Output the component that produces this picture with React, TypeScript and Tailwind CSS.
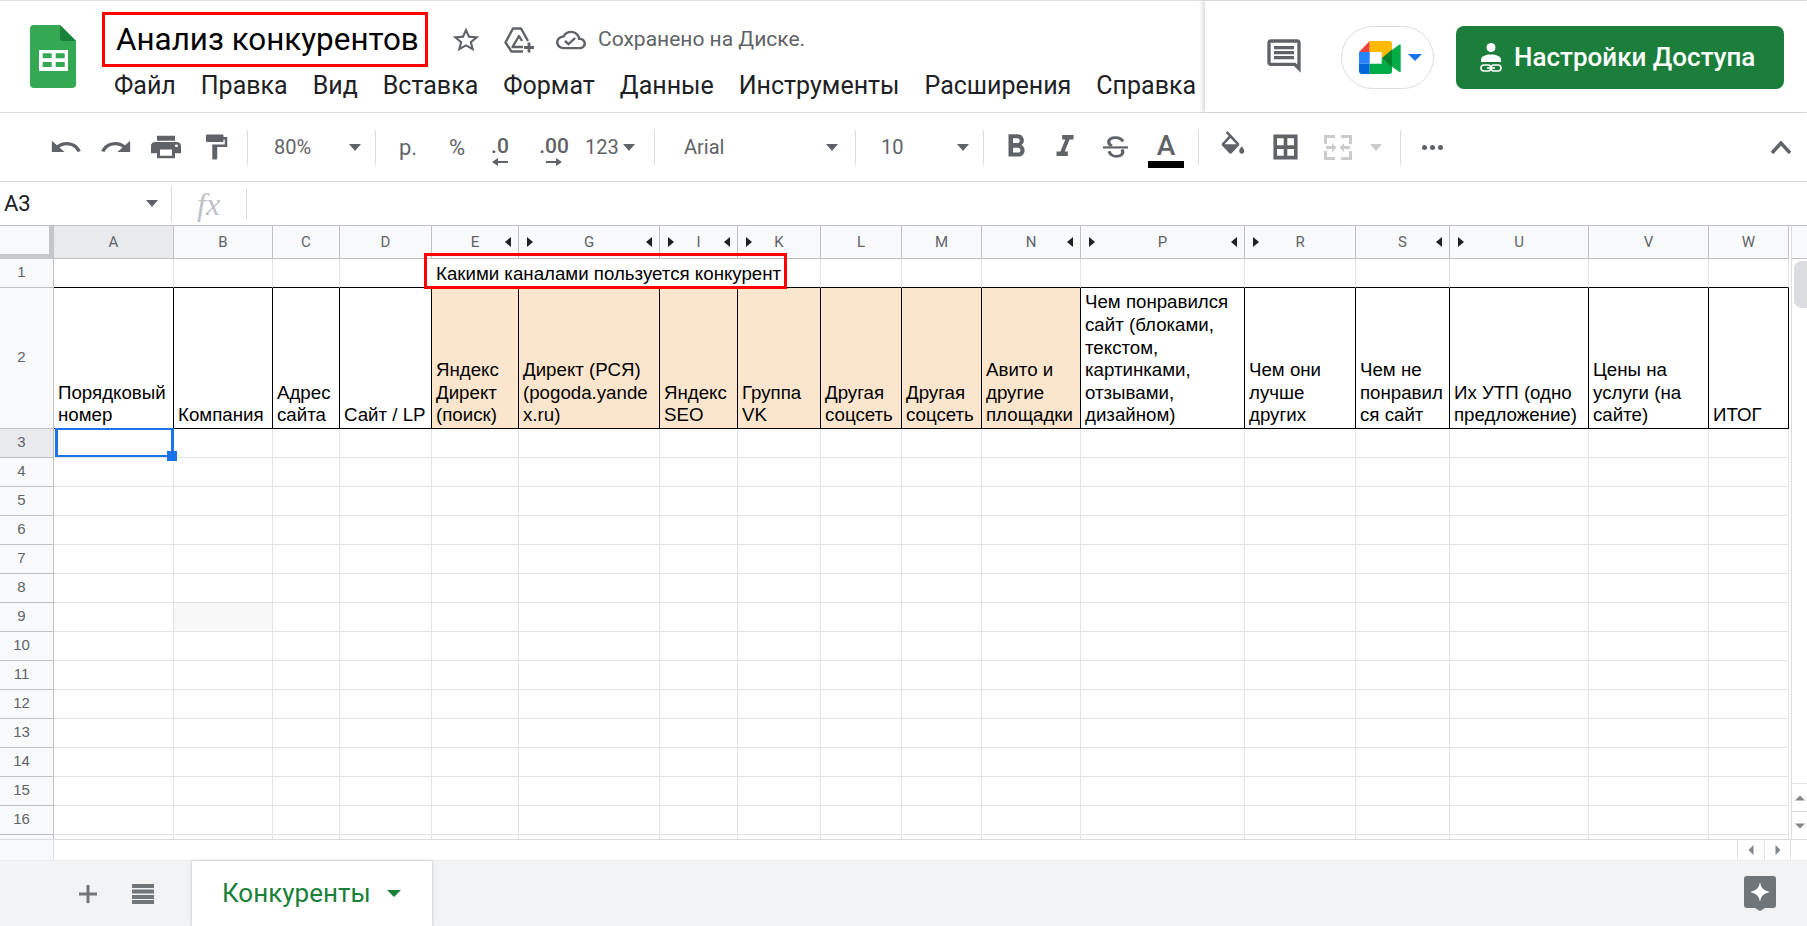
import type { ReactNode } from "react";

const icons = {
  undo: "M12.5 8c-2.65 0-5.05.99-6.9 2.6L2 7v9h9l-3.62-3.62c1.39-1.16 3.16-1.88 5.12-1.88 3.54 0 6.55 2.31 7.6 5.5l2.37-.78C21.08 11.03 17.15 8 12.5 8z",
  redo: "M18.4 10.6C16.55 8.99 14.15 8 11.5 8c-4.65 0-8.58 3.03-9.96 7.22L3.9 16c1.05-3.19 4.05-5.5 7.6-5.5 1.95 0 3.73.72 5.12 1.88L13 16h9V7l-3.6 3.6z",
  print: "M19 8H5c-1.66 0-3 1.34-3 3v6h4v4h12v-4h4v-6c0-1.66-1.34-3-3-3zm-3 11H8v-5h8v5zm3-7c-.55 0-1-.45-1-1s.45-1 1-1 1 .45 1 1-.45 1-1 1zm-1-9H6v4h12V3z",
  paint: "M18 4V3c0-.55-.45-1-1-1H5c-.55 0-1 .45-1 1v4c0 .55.45 1 1 1h12c.55 0 1-.45 1-1V6h1v4H9v11c0 .55.45 1 1 1h2c.55 0 1-.45 1-1v-9h8V4h-3z",
  bold: "M15.6 10.79c.97-.67 1.65-1.77 1.65-2.79 0-2.26-1.75-4-4-4H7v14h7.04c2.09 0 3.71-1.7 3.71-3.79 0-1.52-.86-2.82-2.15-3.42zM10 6.5h3c.83 0 1.5.67 1.5 1.5s-.67 1.5-1.5 1.5h-3v-3zm3.5 9H10v-3h3.5c.83 0 1.5.67 1.5 1.5s-.67 1.5-1.5 1.5z",
  italic: "M10 4v3h2.21l-3.42 8H6v3h8v-3h-2.21l3.42-8H18V4z",
  star: "M22 9.24l-7.19-.62L12 2 9.19 8.63 2 9.24l5.46 4.73L5.82 21 12 17.27 18.18 21l-1.63-7.03L22 9.24zM12 15.4l-3.76 2.27 1-4.28-3.32-2.88 4.38-.38L12 6.1l1.71 4.04 4.38.38-3.32 2.88 1 4.28L12 15.4z",
  cloud: "M19.35 10.04C18.67 6.59 15.64 4 12 4 9.11 4 6.6 5.64 5.35 8.04 2.34 8.36 0 10.91 0 14c0 3.31 2.69 6 6 6h13c2.76 0 5-2.24 5-5 0-2.64-2.05-4.78-4.65-4.96zM19 18H6c-2.21 0-4-1.79-4-4 0-2.05 1.53-3.76 3.56-3.97l1.07-.11.5-.95C8.08 7.14 9.94 6 12 6c2.62 0 4.88 1.86 5.39 4.43l.3 1.5 1.53.11c1.56.1 2.78 1.41 2.78 2.96 0 1.65-1.35 3-3 3zm-9-3.82l-2.09-2.09L6.5 13.5 10 17l6.01-6.01-1.41-1.41z",
  fill: "M16.56 8.94L7.62 0 6.21 1.41l2.38 2.38-5.15 5.15c-.59.59-.59 1.54 0 2.12l5.5 5.5c.29.29.68.44 1.06.44s.77-.15 1.06-.44l5.5-5.5c.59-.58.59-1.53 0-2.12zM5.21 10L10 5.21 14.79 10H5.21zM19 11.5s-2 2.17-2 3.5c0 1.1.9 2 2 2s2-.9 2-2c0-1.33-2-3.5-2-3.5z",
  borders: "M2 2v20h20V2H2zm8.500 17H5v-5.500h5.500V19zm0-8.500H5V5h5.500v5.500zM19 19h-5.500v-5.500H19V19zm0-8.500h-5.500V5H19v5.500z",
  comment: "M21.99 4c0-1.1-.89-2-1.99-2H4c-1.1 0-2 .9-2 2v12c0 1.1.9 2 2 2h14l4 4-.01-18zM20 4v13.17L18.83 16H4V4h16zM6 12h12v2H6zm0-3h12v2H6zm0-3h12v2H6z",
};

function Icon({ d, className }: { d: string; className: string }) {
  return (
    <svg viewBox="0 0 24 24" preserveAspectRatio="none" fill="currentColor" className={className}>
      <path d={d} />
    </svg>
  );
}

function Caret({ className = "h-[7px] w-3 text-[#5f6368]" }: { className?: string }) {
  return (
    <svg viewBox="0 0 10 5" preserveAspectRatio="none" fill="currentColor" className={"shrink-0 " + className}>
      <path d="M0 0h10L5 5z" />
    </svg>
  );
}

function Sep() {
  return <div className="h-[35px] w-px shrink-0 bg-[#dadce0]" />;
}

function SheetsLogo() {
  return (
    <svg viewBox="0 0 46 63" className="h-[63px] w-[46px] shrink-0">
      <path d="M4 0h26l16 16v43a4 4 0 0 1-4 4H4a4 4 0 0 1-4-4V4a4 4 0 0 1 4-4z" fill="#34a853" />
      <path d="M30 0l16 16H33a3 3 0 0 1-3-3z" fill="#188038" />
      <path d="M9 25h29v21H9z" fill="#fff" />
      <path d="M12.700 28.300h9v5h-9zm13 0h9v5h-9zM12.700 37h9v5h-9zm13 0h9v5h-9z" fill="#34a853" />
    </svg>
  );
}

function MeetLogo() {
  return (
    <svg viewBox="0 0 42 33" className="h-[33px] w-[42px] shrink-0">
      <path d="M10.700 0L0 11h10.700z" fill="#ea4335" />
      <path d="M0 11h10.700v11.700H0z" fill="#2684fc" />
      <path d="M0 22.700h10.700V33H3a3 3 0 0 1-3-3z" fill="#0066da" />
      <path d="M10.700 0H30a3 3 0 0 1 3 3v8.500l-10.300 5.800V11h-12z" fill="#ffba00" />
      <path d="M10.700 22.700h12v-5.400L33 26v4a3 3 0 0 1-3 3H10.700z" fill="#00ac47" />
      <path d="M22.700 17.300L33 8.500v18z" fill="#00832d" />
      <path d="M33 9l7.500-5.400a.8.800 0 0 1 1.200.7v25.900a.8.800 0 0 1-1.200.7L33 25.700z" fill="#00ac47" />
    </svg>
  );
}

function ShareIcon() {
  return (
    <svg viewBox="0 0 22 29" fill="none" className="h-[29px] w-[22px] shrink-0">
      <circle cx="11" cy="4.500" r="4.500" fill="#fff" />
      <path d="M1 19v-2.500c0-3 4.500-5 10-5s10 2 10 5V19z" fill="#fff" />
      <rect x="1" y="22" width="10" height="6" rx="3" stroke="#fff" strokeWidth="1.6" />
      <rect x="11" y="22" width="10" height="6" rx="3" stroke="#fff" strokeWidth="1.6" />
      <path d="M7 25h8" stroke="#fff" strokeWidth="1.6" />
    </svg>
  );
}

function TopBar() {
  const menu = ["Файл", "Правка", "Вид", "Вставка", "Формат", "Данные", "Инструменты", "Расширения", "Справка"];
  return (
    <header className="flex h-[113px] shrink-0 border-y border-t-[#e0e0e0] border-b-[#dadce0] bg-white">
      <div className="flex w-[1205px] shrink-0 items-start pl-[30px] pt-6">
        <SheetsLogo />
        <div className="ml-[26px] -mt-[13px] flex flex-col">
          <div className="flex h-[55px] items-center">
            <div className="flex h-[55px] w-[326px] items-center border-[3px] border-[#ff0000] pl-[11px] text-[31.4px] text-black">
              Анализ конкурентов
            </div>
            <Icon d={icons.star} className="ml-[22px] h-[30px] w-[32px] text-[#5f6368]" />
            <svg viewBox="0 0 31 26" fill="none" stroke="#5f6368" strokeWidth="2.4" strokeLinejoin="round" className="ml-[22px] h-[26px] w-[31px]">
              <path d="M24 14L17 1.500H9L1.500 15.500 7.500 24.500H19" />
              <path d="M19 20H8.500L15 9l3 5" />
              <path d="M25 15.500v10M20 20.500h10" strokeWidth="2.800" />
            </svg>
            <Icon d={icons.cloud} className="ml-[21px] h-[28px] w-[30px] text-[#5f6368]" />
            <span className="ml-3 text-[21px] text-[#5f6368]">Сохранено на Диске.</span>
          </div>
          <nav className="mt-[3px] flex gap-[25px] pl-3 text-[25px] leading-[32px] text-[#202124]">
            {menu.map((m) => (
              <span key={m}>{m}</span>
            ))}
          </nav>
        </div>
      </div>
      <div className="flex flex-1 items-start pt-[25px] shadow-[-3px_0_3px_rgba(0,0,0,0.12)]">
        <Icon d={icons.comment} className="ml-[59px] mt-[10px] h-[40px] w-[40px] text-[#5f6368]" />
        <div className="ml-[37px] flex h-[63px] w-[93px] items-center gap-[7px] rounded-[32px] border border-[#dadce0] pl-[17px]">
          <MeetLogo />
          <Caret className="h-[7px] w-[14px] text-[#1a73e8]" />
        </div>
        <div className="ml-[22px] flex h-[63px] w-[328px] items-center gap-3 rounded-lg bg-[#1b7f3b] pl-6 text-[26px] font-medium text-white">
          <ShareIcon />
          Настройки Доступа
        </div>
      </div>
    </header>
  );
}

function Toolbar() {
  return (
    <div className="flex h-[69px] shrink-0 items-center border-b border-[#dadce0] bg-white pl-[41px] text-[20px] text-[#5f6368]">
      <div className="flex w-[50px] justify-center"><Icon d={icons.undo} className="h-[30px] w-[34px]" /></div>
      <div className="flex w-[50px] justify-center"><Icon d={icons.redo} className="h-[30px] w-[34px]" /></div>
      <div className="flex w-[50px] justify-center"><Icon d={icons.print} className="h-[30px] w-[36px]" /></div>
      <div className="flex w-[50px] justify-center"><Icon d={icons.paint} className="h-[30px] w-[30px]" /></div>
      <div className="ml-[6px]"><Sep /></div>
      <div className="flex w-[127px] items-center justify-between pl-[26px] pr-[14px]">
        <span>80%</span>
        <Caret />
      </div>
      <Sep />
      <div className="w-[64px] text-center text-[22px]">р.</div>
      <div className="w-[34px] text-center text-[22px]">%</div>
      <div className="flex h-[40px] w-[52px] flex-col items-center pt-2 text-[21px] font-medium leading-[23px]">
        .0
        <svg viewBox="0 0 16 8" fill="currentColor" className="h-2 w-4"><path d="M16 3H6V0L0 4l6 4V5h10z" /></svg>
      </div>
      <div className="flex h-[40px] w-[56px] flex-col items-center pt-2 text-[21px] font-medium leading-[23px]">
        .00
        <svg viewBox="0 0 16 8" fill="currentColor" className="h-2 w-4"><path d="M0 3h10V0l6 4-6 4V5H0z" /></svg>
      </div>
      <div className="flex w-[72px] items-center gap-1 pl-[3px]">
        <span>123</span>
        <Caret />
      </div>
      <Sep />
      <div className="flex w-[200px] items-center justify-between pl-[29px] pr-[17px]">
        <span>Arial</span>
        <Caret />
      </div>
      <Sep />
      <div className="flex w-[127px] items-center justify-between pl-[25px] pr-[14px]">
        <span>10</span>
        <Caret />
      </div>
      <Sep />
      <div className="flex w-[64px] justify-center"><Icon d={icons.bold} className="h-[38px] w-[36px]" /></div>
      <div className="flex w-[34px] justify-center"><Icon d={icons.italic} className="h-[36px] w-[34px]" /></div>
      <div className="flex w-[66px] justify-center">
        <svg viewBox="0 0 24 26" fill="none" stroke="currentColor" strokeWidth="3.200" preserveAspectRatio="none" className="h-[22px] w-[25px]">
          <path d="M19 6.500C18 3.500 15.500 2 12 2 8 2 5.500 4 5.500 7c0 2 1 3.500 3 4.500M6 18c.5 3.500 3 6 6.500 6 4 0 6.500-2 6.500-5 0-1.200-.3-2-1-3" />
          <path d="M0 13.500h24" strokeWidth="2.600" />
        </svg>
      </div>
      <div className="mt-1 flex w-[36px] flex-col items-center">
        <span className="text-[28px] font-medium leading-[30px]">A</span>
        <div className="h-[7px] w-[36px] bg-black" />
      </div>
      <div className="ml-[14px]"><Sep /></div>
      <div className="flex w-[68px] justify-center"><Icon d={icons.fill} className="h-[32px] w-[30px]" /></div>
      <div className="flex w-[36px] justify-center"><Icon d={icons.borders} className="h-[30px] w-[29px]" /></div>
      <svg viewBox="0 0 28 25" fill="none" stroke="#c9cbcd" strokeWidth="3" className="ml-[21px] h-[25px] w-7 shrink-0">
        <path d="M11 1.500H1.500V9M17 1.500h9.500V9M11 23.500H1.500V16M17 23.500h9.500V16M2 12.500h7M26 12.500h-7" />
        <path d="M12.500 12.500l-4.500-4.500v9zM15.500 12.500l4.500-4.500v9z" fill="#c9cbcd" stroke="none" />
      </svg>
      <Caret className="ml-[18px] h-[7px] w-3 text-[#c9cbcd]" />
      <div className="ml-[18px]"><Sep /></div>
      <div className="ml-[21px] flex gap-[3px]">
        <span className="size-[5px] rounded-full bg-[#5f6368]" />
        <span className="size-[5px] rounded-full bg-[#5f6368]" />
        <span className="size-[5px] rounded-full bg-[#5f6368]" />
      </div>
      <svg viewBox="0 0 22 14" fill="none" stroke="#5f6368" strokeWidth="3.500" className="ml-[327px] h-[14px] w-[22px]">
        <path d="M2 13l9-10 9 10" />
      </svg>
    </div>
  );
}

function FormulaBar() {
  return (
    <div className="flex h-[44px] shrink-0 items-center border-b border-[#c0c0c0] bg-white">
      <div className="flex w-[171px] items-center justify-between pl-1 pr-[13px] text-[22px] text-[#202124]">
        <span>A3</span>
        <Caret />
      </div>
      <div className="h-[36px] w-px bg-[#dadce0]" />
      <span className="w-[74px] pl-[25px] font-['Liberation_Serif',serif] text-[32px] italic text-[#bdc1c6]">fx</span>
      <div className="h-[30px] w-px bg-[#dadce0]" />
    </div>
  );
}

type Col = { name: string; lines: string[]; orange?: boolean; left?: boolean; right?: boolean };

const cols: Col[] = [
  { name: "A", lines: ["Порядковый", "номер"] },
  { name: "B", lines: ["Компания"] },
  { name: "C", lines: ["Адрес", "сайта"] },
  { name: "D", lines: ["Сайт / LP"] },
  { name: "E", lines: ["Яндекс", "Директ", "(поиск)"], orange: true, right: true },
  { name: "G", lines: ["Директ (РСЯ)", "(pogoda.yande", "x.ru)"], orange: true, left: true, right: true },
  { name: "I", lines: ["Яндекс", "SEO"], orange: true, left: true, right: true },
  { name: "K", lines: ["Группа", "VK"], orange: true, left: true },
  { name: "L", lines: ["Другая", "соцсеть"], orange: true },
  { name: "M", lines: ["Другая", "соцсеть"], orange: true },
  { name: "N", lines: ["Авито и", "другие", "площадки"], orange: true, right: true },
  { name: "P", lines: ["Чем понравился", "сайт (блоками,", "текстом,", "картинками,", "отзывами,", "дизайном)"], left: true, right: true },
  { name: "R", lines: ["Чем они", "лучше", "других"], left: true },
  { name: "S", lines: ["Чем не", "понравил", "ся сайт"], right: true },
  { name: "U", lines: ["Их УТП (одно", "предложение)"], left: true },
  { name: "V", lines: ["Цены на", "услуги (на", "сайте)"] },
  { name: "W", lines: ["ИТОГ"] },
];

const rowNums = Array.from({ length: 15 }, (_, i) => i + 3);

function Arrow({ dir, className }: { dir: "l" | "r"; className: string }) {
  return (
    <svg viewBox="0 0 6 10" fill="#202124" className={"absolute top-[11px] h-[10px] w-[6px] " + className}>
      <path d={dir === "l" ? "M6 0v10L0 5z" : "M0 0v10l6-5z"} />
    </svg>
  );
}

function RowHead({ children, active }: { children?: ReactNode; active?: boolean }) {
  return (
    <div className={"flex items-center justify-center border-b border-r border-[#c0c0c0] pb-[2px] pr-[10px] text-[15px] text-[#5f6368] " + (active ? "bg-[#e8eaed]" : "bg-[#f8f9fa]")}>
      {children}
    </div>
  );
}

function Grid() {
  return (
    <div className="grid w-[1789px] shrink-0 grid-cols-[54px_120px_99px_67px_92px_87px_141px_78px_83px_81px_80px_99px_164px_111px_94px_139px_120px_80px] grid-rows-[33px_29px_141px] auto-rows-[29px] overflow-hidden bg-white font-['Liberation_Sans',sans-serif] text-[18.7px] leading-[22.6px] text-black">
      <div className="border-b-[5px] border-r-[5px] border-[#c4c7c9] bg-[#f8f9fa]" />
      {cols.map((c) => (
        <div
          key={c.name}
          className={"relative flex items-center justify-center border-b border-r border-[#c0c0c0] font-['Roboto',sans-serif] text-[15px] text-[#5f6368] " + (c.name === "A" ? "bg-[#e8eaed]" : "bg-[#f8f9fa]")}
        >
          {c.name}
          {c.right && <Arrow dir="l" className="right-[7px]" />}
          {c.left && <Arrow dir="r" className="left-[8px]" />}
        </div>
      ))}

      <RowHead>1</RowHead>
      {cols.slice(0, 4).map((c) => (
        <div key={c.name} className={"border-b border-black " + (c.name === "D" ? "" : "border-r border-r-[#e2e3e3]")} />
      ))}
      <div className="col-span-4 flex items-center whitespace-nowrap border-b border-r border-black border-r-[#e2e3e3] pl-1 pt-[2px]">
        Какими каналами пользуется конкурент
      </div>
      {cols.slice(8).map((c) => (
        <div key={c.name} className="border-b border-r border-black border-r-[#e2e3e3]" />
      ))}

      <RowHead>2</RowHead>
      {cols.map((c) => (
        <div
          key={c.name}
          className={"flex flex-col justify-end overflow-hidden whitespace-nowrap border-b border-r border-black pb-[1px] pl-[4px] " + (c.orange ? "bg-[#fce5cd]" : "bg-white")}
        >
          {c.lines.map((l) => (
            <span key={l}>{l}</span>
          ))}
        </div>
      ))}

      {rowNums.map((n) => (
        <div key={n} className="contents">
          <RowHead active={n === 3}>{n < 17 ? n : null}</RowHead>
          {cols.map((c) => (
            <div
              key={c.name}
              className={"relative border-b border-r border-[#e2e3e3] " + (n === 9 && c.name === "B" ? "bg-[#f8f8f8] " : "") + (n === 3 && c.name === "A" ? "z-10" : "")}
            >
              {n === 3 && c.name === "A" && (
                <>
                  <div className="absolute left-[1px] top-[-1px] h-[29px] w-[119px] border-x-[3px] border-y-2 border-[#1a73e8]" />
                  <div className="absolute left-[113px] top-[22px] size-[10px] bg-[#1a73e8]" />
                </>
              )}
            </div>
          ))}
        </div>
      ))}
    </div>
  );
}

function VScroll() {
  return (
    <div className="ml-[2px] flex flex-1 flex-col border-l border-[#dadce0] bg-white">
      <div className="h-[33px] shrink-0 border-b border-[#c0c0c0] bg-[#f8f9fa]" />
      <div className="ml-[2px] mt-[2px] h-[47px] rounded-l-lg bg-[#dadce0]" />
      <div className="flex-1" />
      <div className="flex h-[28px] items-center justify-center border-t border-[#e2e3e3]">
        <svg viewBox="0 0 10 5" fill="#80868b" className="h-[6px] w-[10px]"><path d="M0 5h10L5 0z" /></svg>
      </div>
      <div className="flex h-[28px] items-center justify-center border-t border-[#d2d4e8]">
        <svg viewBox="0 0 10 5" fill="#80868b" className="h-[6px] w-[10px]"><path d="M0 0h10L5 5z" /></svg>
      </div>
    </div>
  );
}

function HScroll() {
  return (
    <div className="flex h-[21px] shrink-0 border-t border-[#dadce0] bg-white">
      <div className="w-[54px] border-r border-[#dadce0] bg-[#f8f9fa]" />
      <div className="flex-1" />
      <div className="flex w-[27px] items-center justify-center border-l border-[#e2e3e3]">
        <svg viewBox="0 0 5 10" fill="#80868b" className="h-[10px] w-[6px]"><path d="M5 0v10L0 5z" /></svg>
      </div>
      <div className="flex w-[27px] items-center justify-center border-x border-[#e2e3e3]">
        <svg viewBox="0 0 5 10" fill="#80868b" className="h-[10px] w-[6px]"><path d="M0 0v10l5-5z" /></svg>
      </div>
      <div className="w-[16px]" />
    </div>
  );
}

function BottomBar() {
  return (
    <div className="flex h-[66px] flex-1 items-center border-t border-[#e8eaed] bg-[#f1f3f4] font-['Roboto',sans-serif]">
      <svg viewBox="0 0 18 18" fill="#70757a" className="ml-[79px] size-[18px]"><path d="M7.500 0h3v7.500H18v3h-7.500V18h-3v-7.500H0v-3h7.500z" /></svg>
      <svg viewBox="0 0 22 20" fill="#70757a" className="ml-[35px] h-5 w-[22px]"><path d="M0 0h22v4H0zm0 5.500h22v4H0zM0 11h22v4H0zm0 5h22v4H0z" /></svg>
      <div className="ml-[38px] flex h-full w-[240px] items-center bg-white pl-[30px] text-[26px] text-[#188038] shadow-[0_0_3px_rgba(60,64,67,0.3)]">
        Конкуренты
        <Caret className="ml-4 h-[7px] w-[14px] text-[#188038]" />
      </div>
      <svg viewBox="0 0 32 35" fill="#70757a" className="ml-auto mr-[31px] h-[35px] w-8">
        <path d="M3 0h26a3 3 0 0 1 3 3v26a3 3 0 0 1-3 3h-8l-5 3-5-3H3a3 3 0 0 1-3-3V3a3 3 0 0 1 3-3z" />
        <path d="M16 6c1 6 3 8 10 10-7 2-9 4-10 10-1-6-3-8-10-10 7-2 9-4 10-10z" fill="#fff" />
      </svg>
    </div>
  );
}

export default function App() {
  return (
    <div className="relative flex h-[926px] w-[1807px] flex-col overflow-hidden bg-white font-['Roboto',sans-serif]">
      <TopBar />
      <Toolbar />
      <FormulaBar />
      <div className="flex h-[613px] shrink-0 overflow-hidden">
        <Grid />
        <VScroll />
      </div>
      <HScroll />
      <BottomBar />
      <div className="pointer-events-none absolute left-[424px] top-[253px] h-9 w-[363px] border-[3px] border-[#ff0000]" />
    </div>
  );
}
